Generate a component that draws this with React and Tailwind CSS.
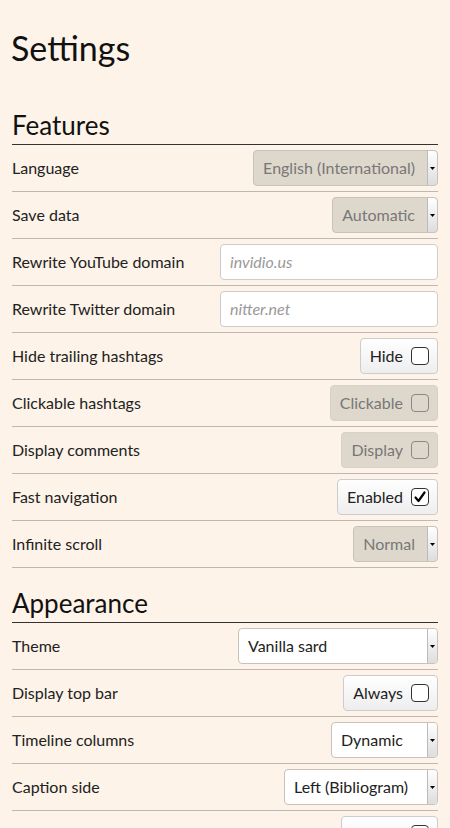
import React from 'react';

const features = [
  { label: 'Language', type: 'select', value: 'English (International)', disabled: true },
  { label: 'Save data', type: 'select', value: 'Automatic', disabled: true },
  { label: 'Rewrite YouTube domain', type: 'input', placeholder: 'invidio.us' },
  { label: 'Rewrite Twitter domain', type: 'input', placeholder: 'nitter.net' },
  { label: 'Hide trailing hashtags', type: 'check', value: 'Hide' },
  { label: 'Clickable hashtags', type: 'check', value: 'Clickable', disabled: true },
  { label: 'Display comments', type: 'check', value: 'Display', disabled: true },
  { label: 'Fast navigation', type: 'check', value: 'Enabled', checked: true },
  { label: 'Infinite scroll', type: 'select', value: 'Normal', disabled: true },
];

const appearance = [
  { label: 'Theme', type: 'select', value: 'Vanilla sard', width: 'w-[200px]' },
  { label: 'Display top bar', type: 'check', value: 'Always' },
  { label: 'Timeline columns', type: 'select', value: 'Dynamic', width: 'w-[107px]' },
  { label: 'Caption side', type: 'select', value: 'Left (Bibliogram)', width: 'w-[154px]' },
  { label: 'Display alt text', type: 'check', value: 'Display' },
];

function Select({ value, disabled, width }) {
  return (
    <div
      className={`flex h-9 items-stretch rounded border border-[#c9c2b8] ${
        disabled ? 'bg-[#ded7cc] text-[#777]' : 'bg-white text-[#222]'
      } ${width || ''}`}
    >
      <span className={`flex flex-1 items-center text-[16px] ${width ? 'pl-[9px]' : 'pl-[9px] pr-[12px]'}`}>{value}</span>
      <span className="flex w-[10px] items-center justify-center rounded-r border-l border-[#bbb] bg-gradient-to-b from-white to-[#ddd]">
        <svg width="5" height="3" viewBox="0 0 5 3">
          <path d="M0 0h5L2.5 3z" fill="#000" />
        </svg>
      </span>
    </div>
  );
}

function Check({ value, disabled, checked }) {
  return (
    <div
      className={`flex h-9 items-center gap-[8px] rounded border pl-[9px] pr-[8px] text-[16px] ${
        disabled
          ? 'border-[#d8d1c6] bg-[#ded7cc] text-[#777]'
          : 'border-[#ccc] bg-gradient-to-b from-white to-[#eee] text-[#222]'
      }`}
    >
      <span>{value}</span>
      <span
        className={`flex h-[18px] w-[18px] items-center justify-center rounded-[4px] border ${
          disabled ? 'border-[#888]' : 'border-[#333] bg-white'
        }`}
      >
        {checked && (
          <svg width="14" height="14" viewBox="0 0 14 14">
            <path d="M2.5 7.5l3 3.5L11.5 2.5" fill="none" stroke="#000" strokeWidth="2.2" strokeLinecap="round" strokeLinejoin="round" />
          </svg>
        )}
      </span>
    </div>
  );
}

function Row({ item }) {
  return (
    <div className="flex h-[47px] items-center justify-between border-b border-[#bdb8b1]">
      <span className="text-[16px] text-[#222]">{item.label}</span>
      {item.type === 'select' && <Select {...item} />}
      {item.type === 'check' && <Check {...item} />}
      {item.type === 'input' && (
        <div className="flex h-9 w-[218px] items-center rounded border border-[#ccc] bg-white px-[9px] text-[16px] italic text-[#999]">
          {item.placeholder}
        </div>
      )}
    </div>
  );
}

function Section({ title, items }) {
  return (
    <section>
      <h2 className="border-b border-[#333] pb-[2px] text-[26px] leading-[34px] text-[#111]">{title}</h2>
      {items.map((item) => (
        <Row key={item.label} item={item} />
      ))}
    </section>
  );
}

export default function App() {
  return (
    <div
      className="h-[828px] overflow-hidden bg-[#fdf3e8] px-3"
      style={{ fontFamily: 'Lato, "Noto Sans", sans-serif' }}
    >
      <h1 className="pt-[26px] pb-[38px] text-[34px] leading-[44px] text-[#111] -ml-[1px]">Settings</h1>
      <div className="flex flex-col">
        <Section title="Features" items={features} />
        <div className="h-[18px]" />
        <Section title="Appearance" items={appearance} />
      </div>
    </div>
  );
}
